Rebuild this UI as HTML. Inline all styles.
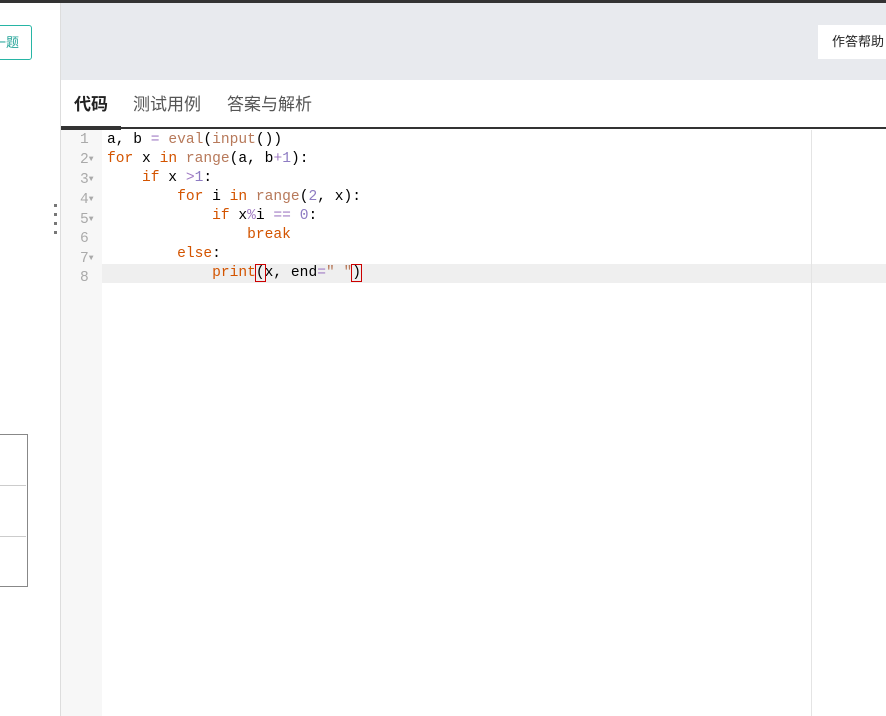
<!DOCTYPE html><html><head><meta charset="utf-8"><style>
body{margin:0;width:886px;height:716px;overflow:hidden;background:#fff;font-family:"Liberation Sans","Noto Sans CJK SC",sans-serif;position:relative}
.a{position:absolute}
.code{font-family:"Liberation Mono",monospace;font-size:14.6px;line-height:19px;white-space:pre;color:#000}
.k{color:#d35400}.o{color:#a17cc4}.f{color:#b7795a}.n{color:#8e7cc3}
.g{color:#aaa}
.ar{font-size:8px;vertical-align:2px}
</style></head><body>
<div class="a" style="left:0;top:0;width:886px;height:3px;background:#333"></div>
<div class="a" style="left:-20px;top:25px;width:38px;height:33px;border:1px solid #27b5a5;border-radius:3px;color:#27a59a;font-size:13px;line-height:33px;text-align:right;padding-right:12px">一题</div>
<div class="a" style="left:-1px;top:434px;width:27px;height:151px;border:1px solid #888"></div>
<div class="a" style="left:0;top:485px;width:26px;height:1px;background:#ccc"></div>
<div class="a" style="left:0;top:536px;width:26px;height:1px;background:#ccc"></div>
<div class="a" style="left:54px;top:204px;width:3px;height:3px;background:#777"></div>
<div class="a" style="left:54px;top:213px;width:3px;height:3px;background:#777"></div>
<div class="a" style="left:54px;top:222px;width:3px;height:3px;background:#777"></div>
<div class="a" style="left:54px;top:231px;width:3px;height:3px;background:#777"></div>
<div class="a" style="left:60px;top:3px;width:1px;height:713px;background:#ddd"></div>
<div class="a" style="left:61px;top:3px;width:825px;height:77px;background:#e8eaee"></div>
<div class="a" style="left:818px;top:25px;width:80px;height:34px;background:#fff;font-size:13px;line-height:34px;padding-left:14px;color:#222">作答帮助</div>
<div class="a" style="left:74px;top:90px;font-size:17px;font-weight:bold;color:#222">代码</div>
<div class="a" style="left:133px;top:90px;font-size:17px;color:#555">测试用例</div>
<div class="a" style="left:227px;top:90px;font-size:17px;color:#555">答案与解析</div>
<div class="a" style="left:61px;top:127px;width:825px;height:2px;background:#333"></div>
<div class="a" style="left:61px;top:126px;width:60px;height:4px;background:#333"></div>
<div class="a" style="left:61px;top:130px;width:41px;height:586px;background:#f7f7f7"></div>
<div class="a" style="left:102px;top:264px;width:784px;height:19px;background:#efefef"></div>
<div class="a" style="left:811px;top:130px;width:1px;height:586px;background:#e4e4e4"></div>
<div class="a code g" style="left:80px;top:131px">1
2<span class="ar">▼</span>
3<span class="ar">▼</span>
4<span class="ar">▼</span>
5<span class="ar">▼</span>
6
7<span class="ar">▼</span>
8</div>
<div class="a code" style="left:107px;top:131px">a, b <span class="o">=</span> <span class="f">eval</span>(<span class="f">input</span>())
<span class="k">for</span> x <span class="k">in</span> <span class="f">range</span>(a, b<span class="o">+</span><span class="n">1</span>):
    <span class="k">if</span> x <span class="o">&gt;</span><span class="n">1</span>:
        <span class="k">for</span> i <span class="k">in</span> <span class="f">range</span>(<span class="n">2</span>, x):
            <span class="k">if</span> x<span class="o">%</span>i <span class="o">==</span> <span class="n">0</span>:
                <span class="k">break</span>
        <span class="k">else</span>:
            <span class="k">print</span><span style="outline:1px solid #c00">(</span>x, end<span class="o">=</span><span class="f">" "</span><span style="outline:1px solid #c00">)</span></div>
</body></html>
